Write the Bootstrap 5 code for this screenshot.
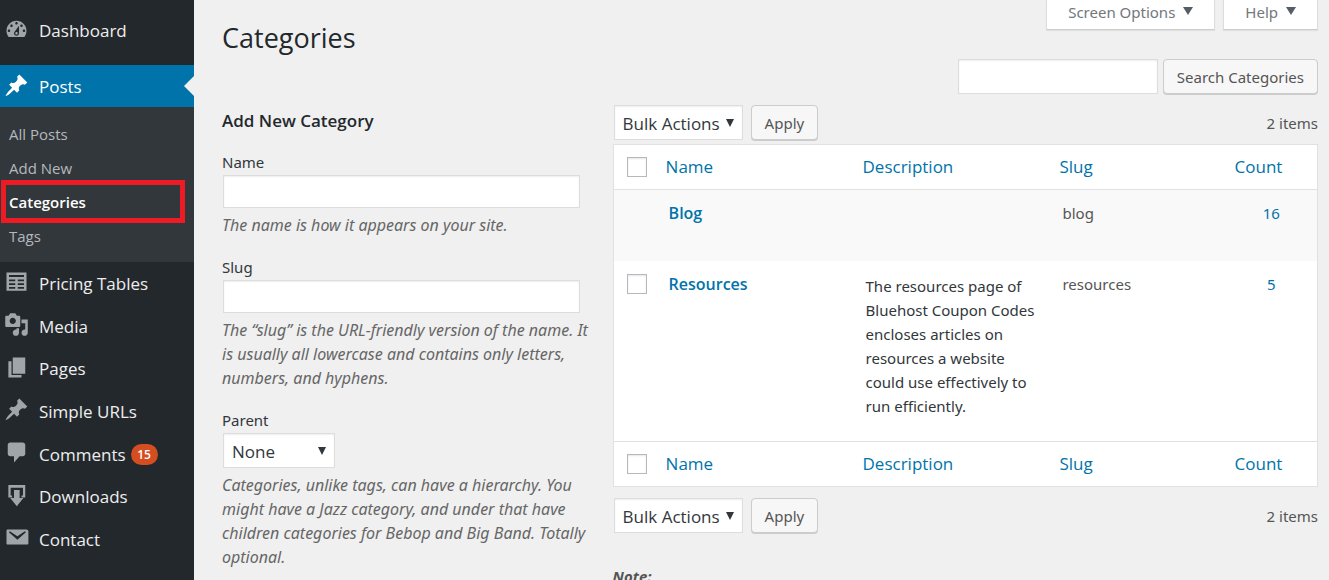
<!DOCTYPE html>
<html lang="en">
<head>
<meta charset="utf-8">
<meta name="viewport" content="width=device-width, initial-scale=1">
<title>Categories</title>
<link href="https://cdn.jsdelivr.net/npm/bootstrap@5.3.0/dist/css/bootstrap.min.css" rel="stylesheet">
<style>
body { font-family: "Noto Sans", "Open Sans", sans-serif; font-size: 15px; line-height: 24px; color: #32373c; background: #f0f0f0; }
a { text-decoration: none; color: #0073aa; }

/* Admin menu */
.side-menu { width: 194px; background: #23282d; font-family: "Open Sans", sans-serif; font-size: 17px; padding-top: 9px; }
.side-menu a { color: #eee; }
.menu-link { height: 42px; padding: 2px 0 0 4px; gap: 10px; }
.menu-link svg { width: 25px; height: 25px; fill: #a0a5aa; flex: none; margin-bottom: 4px; }
.menu-first { margin-bottom: 14px; }
.side-menu .menu-link.current { background: #0073aa; color: #fff; position: relative; }
.menu-link.current svg { fill: #fff; }
.menu-link.current::after { content: ""; position: absolute; right: 0; top: 11px; border: 10px solid transparent; border-left: 0; border-right-color: #f0f0f0; }
.submenu { background: #32373c; padding: 10px 0 9px; font-size: 15px; }
.submenu a { display: block; padding: 0 9px; line-height: 34px; color: #b4b9be; }
.submenu .picked { position: relative; }
.submenu .picked a { color: #fff; font-weight: 600; }
.submenu .picked::after { content: ""; position: absolute; inset: -5px 9px -4px 1px; border: 5px solid #ed1c24; pointer-events: none; }
.menu-group { display: grid; grid-auto-rows: 1fr; min-height: 298px; }
.menu-group .menu-link { height: 100%; }
.count-bubble { background: #d54e21; color: #fff; font-size: 12px; font-weight: 600; line-height: 21px; padding: 0 6px; border-radius: 11px; margin-left: -5px; min-width: 27px; text-align: center; }

/* Content */
.content-area { padding: 0 11px 0 28px; }
.page-title { font-family: "Open Sans", sans-serif; font-size: 27px; font-weight: 400; line-height: 36px; color: #23282d; padding-top: 20px; }
.meta-tab { background: #fff; color: #72777c; border: 1px solid #ddd; border-top: 0; border-bottom-color: #ccc; font-size: 15px; height: 30px; line-height: 24px; padding: 0 21px 5px; box-shadow: 0 1px 1px rgba(0,0,0,.06); }
.meta-tab svg { width: 10px; height: 8px; margin: 0 0 5px 8px; fill: #555d66; }
.field { border: 1px solid #ddd; border-radius: 0; box-shadow: inset 0 1px 2px rgba(0,0,0,.07); background-color: #fff; height: 35px; }
.form-col { width: 35%; padding-right: 8px; }
.list-col { width: 65%; padding-left: 7px; }
.form-col h2 { font-family: "Open Sans", sans-serif; font-size: 17px; font-weight: 600; line-height: 24px; color: #23282d; margin-bottom: 17px; }
.form-col label { display: block; margin-bottom: 1px; }
.form-col input { display: block; width: 95%; height: 33px; margin-left: 1px; }
.help-text { color: #666; font-size: 16px; font-style: italic; margin: 5px 0 18px; }
.pick { appearance: none; font-family: "Open Sans", sans-serif; font-size: 17px; line-height: 24px; color: #32373c; margin-left: 1px; padding: 2px 21px 0 8px; background: #fff url("data:image/svg+xml,%3Csvg xmlns='http://www.w3.org/2000/svg' viewBox='0 0 8 8'%3E%3Cpath fill='%2332373c' d='M0 0h8L4 8z'/%3E%3C/svg%3E") no-repeat right 8px center / 8px 8px; }
.parent-pick { width: 112px; }
.wp-button { background: #f7f7f7; border: 1px solid #ccc; border-radius: 4px; box-shadow: 0 1px 0 #ccc; color: #555; font-size: 15px; line-height: 24px; height: 35px; padding: 0 13px; }
.search-row { margin-bottom: 11px; gap: 5px; padding-top: 3px; }
.search-row input { width: 200px; }
.bottom-bar { padding-top: 11px; }
.items-total { color: #555; }

.cat-table { table-layout: fixed; width: 100%; background: #fff; border: 1px solid #e1e1e1; border-collapse: separate; border-spacing: 0; }
.cat-table th { font-family: "Open Sans", sans-serif; font-size: 17px; font-weight: 400; line-height: 24px; padding: 10px 9px; }
.cat-table thead th { border-bottom: 1px solid #e1e1e1; }
.cat-table tfoot th { border-top: 1px solid #e1e1e1; }
.cat-table td { padding: 11px 8px 11px 12px; vertical-align: top; }
.cat-table td.about-text { padding-top: 13px; }
.cat-table td.count-cell { padding-left: 8px; text-align: center; }
.cat-table .tick-cell { width: 43px; padding-left: 13px; padding-right: 0; }
.cat-table .name-col { width: 28%; }
.cat-table .count-col { width: 13%; }
.cat-table .row-title { font-family: "Open Sans", sans-serif; font-size: 16px; font-weight: 600; }
.cat-table tbody tr:first-child { height: 71px; background: #f9f9f9; }
.cat-table tbody tr:last-child { height: 180px; }
.cat-table .slug-text { color: #555; }
.tick { appearance: none; display: block; width: 20px; height: 20px; margin: 2px 0; border: 1px solid #b4b9be; background: #fff; box-shadow: inset 0 1px 2px rgba(0,0,0,.1); }
.note { color: #555; font-weight: 700; font-style: italic; margin-top: 31px; }
</style>
</head>
<body>
<svg class="d-none" xmlns="http://www.w3.org/2000/svg">
  <symbol id="pin" viewBox="0 0 20 20"><path d="M10.44 3.02l1.82-1.82 6.36 6.35-1.83 1.82c-1.05-.68-2.48-.57-3.41.36l-.75.75c-.92.93-1.04 2.35-.35 3.41l-1.83 1.82-2.41-2.41-2.8 2.79c-.42.42-3.38 2.71-3.8 2.29s1.86-3.39 2.28-3.81l2.79-2.79L4.1 9.36l1.83-1.82c1.05.69 2.48.57 3.4-.36l.75-.75c.93-.92 1.05-2.35.36-3.41z"/></symbol>
  <symbol id="down" viewBox="0 0 10 8"><path d="M0 0h10L5 8z"/></symbol>
</svg>
<div class="d-flex min-vh-100 overflow-hidden vh-100">
  <nav class="side-menu flex-shrink-0" aria-label="Admin menu">
    <a href="#" class="menu-link menu-first d-flex align-items-center"><svg viewBox="0 0 20 20"><path fill-rule="evenodd" d="M3.76 16h12.48c1.1-1.37 1.76-3.11 1.76-5 0-4.42-3.58-8-8-8s-8 3.58-8 8c0 1.89.66 3.63 1.76 5zM10 4c.55 0 1 .45 1 1s-.45 1-1 1-1-.45-1-1 .45-1 1-1zM6 6c.55 0 1 .45 1 1s-.45 1-1 1-1-.45-1-1 .45-1 1-1zm8 0c.55 0 1 .45 1 1s-.45 1-1 1-1-.45-1-1 .45-1 1-1zm-5.37 5.55L12 7v6c0 1.1-.9 2-2 2s-2-.9-2-2c0-.57.24-1.08.63-1.45zM4 10c.55 0 1 .45 1 1s-.45 1-1 1-1-.45-1-1 .45-1 1-1zm12 0c.55 0 1 .45 1 1s-.45 1-1 1-1-.45-1-1 .45-1 1-1zm-5 3c0-.55-.45-1-1-1s-1 .45-1 1 .45 1 1 1 1-.45 1-1z"/></svg>Dashboard</a>
    <a href="#" class="menu-link current d-flex align-items-center"><svg><use href="#pin"/></svg>Posts</a>
    <ul class="submenu list-unstyled mb-0">
      <li><a href="#">All Posts</a></li>
      <li><a href="#">Add New</a></li>
      <li class="picked"><a href="#">Categories</a></li>
      <li><a href="#">Tags</a></li>
    </ul>
    <div class="menu-group">
      <a href="#" class="menu-link d-flex align-items-center"><svg viewBox="0 0 20 20"><path fill-rule="evenodd" d="M2 2h16v14.500H2zM4 4v1.500h12V4zM4 7.500V9h5V7.500zM11 7.500V9h5V7.500zM4 10.500V12h5v-1.500zM11 10.500V12h5v-1.500zM4 13.500V15h5v-1.500zM11 13.500V15h5v-1.500z"/></svg>Pricing Tables</a>
      <a href="#" class="menu-link d-flex align-items-center"><svg viewBox="0 0 20 20"><path d="M13 11V4c0-.55-.45-1-1-1h-1.670L9 1H5L3.670 3H2c-.55 0-1 .45-1 1v7c0 .55.45 1 1 1h10c.55 0 1-.45 1-1zM7 4.500c1.380 0 2.500 1.120 2.500 2.500S8.380 9.500 7 9.500 4.500 8.380 4.500 7 5.620 4.500 7 4.500zM14 6h5v10.500c0 1.380-1.120 2.500-2.500 2.500S14 17.880 14 16.500s1.120-2.500 2.500-2.500c.17 0 .34.02.5.05V9h-3V6zm-4 8.050V13h2v3.500c0 1.380-1.120 2.500-2.500 2.500S7 17.880 7 16.500 8.120 14 9.500 14c.17 0 .34.02.5.05z"/></svg>Media</a>
      <a href="#" class="menu-link d-flex align-items-center"><svg viewBox="0 0 20 20"><path d="M7 15V2h10v13H7zm-1 1h8v2H3.500V5H6v11z"/></svg>Pages</a>
      <a href="#" class="menu-link d-flex align-items-center"><svg><use href="#pin"/></svg>Simple URLs</a>
      <a href="#" class="menu-link d-flex align-items-center"><svg viewBox="0 0 20 20"><path d="M5 2h10c1.100 0 2 .9 2 2v7c0 1.100-.9 2-2 2h-2.500L8 18v-5H5c-1.100 0-2-.9-2-2V4c0-1.100.9-2 2-2z"/></svg>Comments <span class="count-bubble">15</span></a>
      <a href="#" class="menu-link d-flex align-items-center"><svg viewBox="0 0 20 20"><path d="M3.500 1.500h13.500v10h-3V10h1.200V3.700H5.300V10h1.200v1.500h-3zM8 5.500h4.500V12h3l-5.250 6.500L5 12h3z"/></svg>Downloads</a>
      <a href="#" class="menu-link d-flex align-items-center"><svg viewBox="0 0 20 20"><path fill-rule="evenodd" d="M3 3.500h15c.8 0 1.500.7 1.500 1.500v9.500c0 .6-.4 1-1 1H3c-.6 0-1-.4-1-1v-10c0-.6.4-1 1-1zM3.900 5.700l6.800 6 6.800-6-.8-.8-6 4.100-6-4.100z"/></svg>Contact</a>
    </div>
  </nav>

  <main class="content-area flex-grow-1">
    <header class="d-flex justify-content-between align-items-start">
      <h1 class="page-title mb-0">Categories</h1>
      <div class="d-flex gap-2">
        <button type="button" class="meta-tab">Screen Options<svg><use href="#down"/></svg></button>
        <button type="button" class="meta-tab">Help<svg><use href="#down"/></svg></button>
      </div>
    </header>
    <form class="search-row d-flex justify-content-end">
      <input type="search" class="field" aria-label="Search Categories">
      <button type="button" class="wp-button">Search Categories</button>
    </form>
    <div class="d-flex">
      <form class="form-col pt-1">
        <h2>Add New Category</h2>
        <label for="cat-name">Name</label>
        <input id="cat-name" type="text" class="field">
        <p class="help-text">The name is how it appears on your site.</p>
        <label for="cat-slug">Slug</label>
        <input id="cat-slug" type="text" class="field">
        <p class="help-text">The “slug” is the URL-friendly version of the name. It is usually all lowercase and contains only letters, numbers, and hyphens.</p>
        <label for="cat-parent">Parent</label>
        <select id="cat-parent" class="field pick parent-pick"><option>None</option></select>
        <p class="help-text">Categories, unlike tags, can have a hierarchy. You might have a Jazz category, and under that have children categories for Bebop and Big Band. Totally optional.</p>
      </form>
      <section class="list-col">
        <div class="d-flex align-items-center gap-2 mb-1">
          <select class="field pick" aria-label="Bulk action"><option>Bulk Actions</option></select>
          <button type="button" class="wp-button">Apply</button>
          <span class="items-total ms-auto">2 items</span>
        </div>
        <table class="cat-table">
          <thead><tr>
            <th class="tick-cell"><input type="checkbox" class="tick" aria-label="Select all"></th>
            <th class="name-col"><a href="#">Name</a></th><th class="name-col"><a href="#">Description</a></th><th><a href="#">Slug</a></th><th class="count-col"><a href="#">Count</a></th>
          </tr></thead>
          <tbody>
            <tr><td></td><td><a href="#" class="row-title">Blog</a></td><td></td><td class="slug-text">blog</td><td class="count-cell"><a href="#">16</a></td></tr>
            <tr><td class="tick-cell"><input type="checkbox" class="tick" aria-label="Select Resources"></td><td><a href="#" class="row-title">Resources</a></td><td class="about-text">The resources page of Bluehost Coupon Codes encloses articles on resources a website could use effectively to run efficiently.</td><td class="slug-text">resources</td><td class="count-cell"><a href="#">5</a></td></tr>
          </tbody>
          <tfoot><tr>
            <th class="tick-cell"><input type="checkbox" class="tick" aria-label="Select all"></th>
            <th><a href="#">Name</a></th><th><a href="#">Description</a></th><th><a href="#">Slug</a></th><th><a href="#">Count</a></th>
          </tr></tfoot>
        </table>
        <div class="bottom-bar d-flex align-items-center gap-2">
          <select class="field pick" aria-label="Bulk action"><option>Bulk Actions</option></select>
          <button type="button" class="wp-button">Apply</button>
          <span class="items-total ms-auto">2 items</span>
        </div>
        <p class="note mb-0">Note:</p>
      </section>
    </div>
  </main>
</div>
<script src="https://cdn.jsdelivr.net/npm/bootstrap@5.3.0/dist/js/bootstrap.bundle.min.js"></script>
</body>
</html>
